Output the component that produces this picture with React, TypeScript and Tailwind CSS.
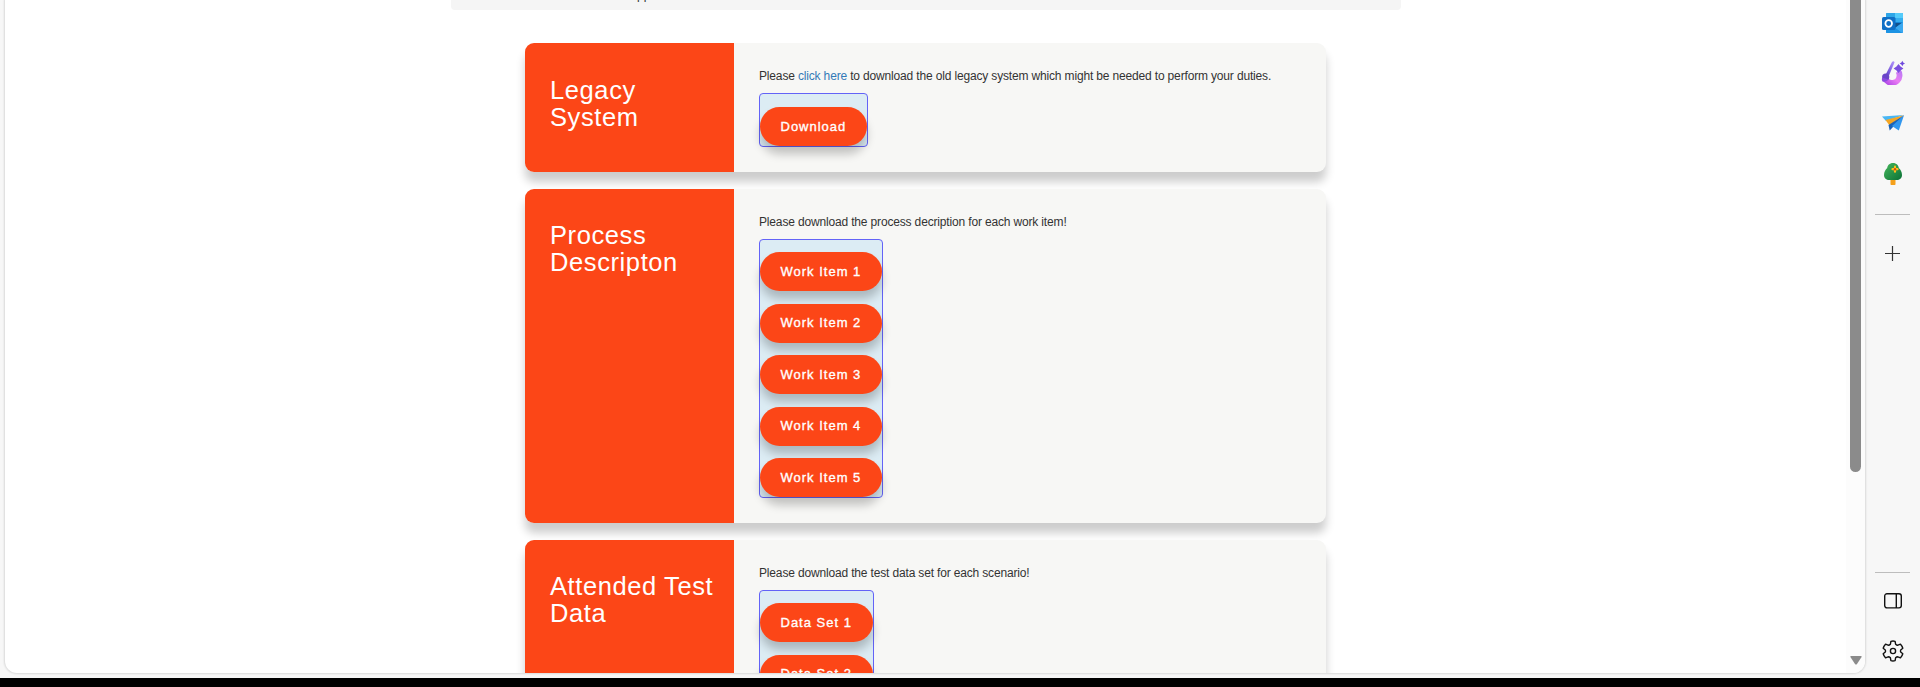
import React from "react";

function PillButton({ label }: { label: string }) {
  return (
    <span className="flex h-[39px] shrink-0 items-center whitespace-nowrap rounded-full bg-[#fc4617] pl-[20.5px] text-[13px] tracking-[1px] text-white shadow-[0_8px_10px_rgba(0,0,0,0.22)] [-webkit-text-stroke:0.35px_white]">
      {label}
    </span>
  );
}

function Card({
  title,
  buttons,
  height,
  titleClass,
  boxClass,
  children,
}: {
  title: string;
  buttons: string[];
  height: string;
  titleClass: string;
  boxClass: string;
  children: React.ReactNode;
}) {
  return (
    <section className={`flex w-[801px] shrink-0 rounded-[9px] bg-[#f7f7f5] shadow-[0_10px_10px_rgba(0,0,0,0.2)] ${height}`}>
      <div className={`w-[209px] shrink-0 rounded-l-[9px] bg-[#fc4617] pl-[25px] pr-2 ${titleClass}`}>
        <h2 className="text-[25.5px] leading-[27px] tracking-[0.6px] text-white">{title}</h2>
      </div>
      <div className="flex grow flex-col items-start pl-[25px] pt-[25px]">
        <p className="whitespace-nowrap text-[12px] leading-[17px] tracking-[-0.16px] text-[#333]">{children}</p>
        <div className={`mt-[8px] flex flex-col gap-[12.5px] rounded-[4px] border border-[#6363f7] bg-[#dcecf4] ${boxClass}`}>
          {buttons.map((b) => (
            <PillButton key={b} label={b} />
          ))}
        </div>
      </div>
    </section>
  );
}

function OutlookIcon() {
  return (
    <svg width="21" height="20" viewBox="0 0 21 20">
      <rect x="4" y="0" width="17" height="20" rx="1.2" fill="#1786d8" />
      <path d="M5 0h8v5H4V1z" fill="#2ea6e8" />
      <path d="M13 0h7a1 1 0 0 1 1 1v8h-8z" fill="#54cbfa" />
      <path d="M12 5h9v4h-9z" fill="#35aef0" />
      <path d="M12 10h9l-8 5z" fill="#12508c" />
      <path d="M21 9v10a1 1 0 0 1-1 1l-7-5z" fill="#3aa8f0" />
      <path d="M4 16l9-1 7 5H5a1 1 0 0 1-1-1z" fill="#1c93e4" />
      <rect x="0" y="4" width="13.500" height="13" rx="1.600" fill="#0f6fc6" />
      <circle cx="6.700" cy="10.500" r="3.300" fill="none" stroke="#fff" strokeWidth="1.800" />
    </svg>
  );
}

function DesignerIcon() {
  return (
    <svg width="24" height="25" viewBox="0 0 24 25">
      <defs>
        <linearGradient id="ring" x1="0" y1="1" x2="1" y2="0">
          <stop offset="0" stopColor="#b44be8" />
          <stop offset=".5" stopColor="#ea7cf3" />
          <stop offset="1" stopColor="#c07af5" />
        </linearGradient>
        <linearGradient id="brush" x1="0" y1="1" x2="1" y2="0">
          <stop offset="0" stopColor="#6040cc" />
          <stop offset="1" stopColor="#b698ff" />
        </linearGradient>
      </defs>
      <path d="M4 18a7.500 7.500 0 0 0 14.500-2q.3-3-1.500-5" fill="none" stroke="url(#ring)" strokeWidth="5.800" />
      <path d="M11 2Q12.500.3 13.600 2.200L8 15.500 5 14z" fill="url(#brush)" />
      <circle cx="4.700" cy="17" r="3.600" fill="#6a45c8" />
      <path d="M1 17.500q-.5 2.500.5 4 3 1 6-2z" fill="#8a4ae0" />
      <path d="M17.500 4l2 2.500 2.900 2-2.900 2-2 2.500-2-2.500-2.900-2 2.900-2z" fill="#7a4edf" />
      <path d="M21.300.8l.9 1.800 1.800.9-1.800.9-.9 1.800-.9-1.800-1.800-.9 1.800-.9z" fill="#6f49dc" />
    </svg>
  );
}

function PlaneIcon() {
  return (
    <svg width="22" height="16" viewBox="0 0 22 16">
      <path d="M0 1.500L22 0 4 6z" fill="#48b6f4" />
      <path d="M3.500 5L22 .2 7.500 10.500z" fill="#f5a623" />
      <path d="M22 .3L6.500 10l1.200 5.500L11 12z" fill="#1b63b8" />
      <path d="M22 .3L10 11l6.800 4.500z" fill="#3197ee" />
    </svg>
  );
}

function TreeIcon() {
  return (
    <svg width="18" height="22" viewBox="0 0 18 22">
      <defs>
        <linearGradient id="leaf" x1="0" y1="0" x2="1" y2="1">
          <stop offset="0" stopColor="#46b85c" />
          <stop offset="1" stopColor="#0b7136" />
        </linearGradient>
      </defs>
      <rect x="6.500" y="14" width="5" height="8" rx=".7" fill="#f5a01b" />
      <path d="M9 0C5.500 0 3.500 2.500 3.200 5 1.500 6.500 0 9 0 12c0 3.500 2.500 5 5 5h8c2.500 0 5-1.500 5-5 0-3-1.500-5.500-3.200-7C14.500 2.500 12.500 0 9 0z" fill="url(#leaf)" />
      <path d="M11 3.700v5M8.500 6.200h5" stroke="#fbc21c" strokeWidth="2.200" strokeLinecap="round" />
      <circle cx="11" cy="6.200" r="1.200" fill="#d9480f" />
    </svg>
  );
}

function GearIcon() {
  return (
    <svg width="22" height="22" viewBox="0 0 22 22" fill="none" stroke="#111" strokeWidth="1.400" strokeLinejoin="round">
      <path d="M8.900 1.300Q11 .6 13.100 1.300L13.600 4.200Q14.800 5.300 15.900 5.200L18.500 4.200Q20.200 6 20.800 8.200L18.700 10Q18.300 11 18.700 12L20.800 13.800Q20.200 16 18.500 17.800L15.900 16.800Q14.500 16.800 13.600 17.800L13.100 20.700Q11 21.400 8.900 20.700L8.400 17.800Q7.500 16.800 6.100 16.800L3.500 17.800Q1.800 16 1.200 13.800L3.300 12Q3.700 11 3.300 10L1.200 8.200Q1.800 6 3.500 4.200L6.100 5.200Q7.500 5.200 8.400 4.200Z" />
      <circle cx="11" cy="11" r="2.600" />
    </svg>
  );
}

function Sidebar() {
  return (
    <aside className="flex w-[55px] shrink-0 flex-col items-center">
      <div className="flex h-[46px] items-center"><OutlookIcon /></div>
      <div className="flex h-[53px] items-center"><DesignerIcon /></div>
      <div className="flex h-[48px] items-center"><PlaneIcon /></div>
      <div className="flex h-[54px] items-center"><TreeIcon /></div>
      <div className="mt-[13px] h-px w-[35px] bg-[#bdbdbd]" />
      <svg className="mt-[31px]" width="15" height="15" viewBox="0 0 15 15">
        <path d="M7.500 0v15M0 7.500h15" stroke="#333" strokeWidth="1.200" />
      </svg>
      <div className="mt-auto h-px w-[35px] bg-[#bdbdbd]" />
      <svg className="mt-[20px]" width="18" height="16" viewBox="0 0 18 16" fill="none" stroke="#111" strokeWidth="1.400">
        <rect x=".7" y=".7" width="16.600" height="14.200" rx="2.300" />
        <path d="M12.300 1v14" />
      </svg>
      <div className="mb-[16px] mt-[31px]"><GearIcon /></div>
    </aside>
  );
}

export default function App() {
  return (
    <div className="flex h-[687px] w-[1920px] flex-col overflow-hidden bg-black font-['Liberation_Sans',Arial,sans-serif]">
      <div className="flex h-[678px] shrink-0 bg-[#f7f7f7] pl-[5px]">
        <div className="flex h-[673px] w-[1860px] shrink-0 overflow-hidden rounded-b-[12px] bg-white shadow-[0_0_2px_1px_rgba(0,0,0,0.12)]">
          <main className="flex h-[673px] w-[1841px] shrink-0 flex-col overflow-hidden">
            <div className="ml-[446px] flex h-[10px] w-[950px] shrink-0 items-end rounded-b-[4px] bg-[#f5f5f5] pl-[186px]">
              <span className="mb-[9px] text-[12px] leading-[12px] text-[#333]">pp</span>
            </div>
            <div className="ml-[520px] mt-[33px] flex flex-col gap-[17px]">
              <Card title="Legacy System" buttons={["Download"]} height="h-[129px]" titleClass="pt-[34px]" boxClass="w-[109px] pt-[13px]">
                Please <a className="text-[#337ab7]">click here</a> to download the old legacy system which might be needed to perform your duties.
              </Card>
              <Card
                title="Process Descripton"
                buttons={["Work Item 1", "Work Item 2", "Work Item 3", "Work Item 4", "Work Item 5"]}
                height="h-[334px]"
                titleClass="pt-[33px]"
                boxClass="w-[124px] pt-[12px]"
              >
                Please download the process decription for each work item!
              </Card>
              <Card
                title="Attended Test Data"
                buttons={["Data Set 1", "Data Set 2"]}
                height="h-[334px]"
                titleClass="pt-[33px]"
                boxClass="w-[115px] pt-[12px]"
              >
                Please download the test data set for each scenario!
              </Card>
            </div>
          </main>
          <div className="flex w-[19px] shrink-0 flex-col items-center justify-between bg-[#fcfcfc] pb-[8px]">
            <div className="h-[472px] w-[11px] rounded-b-[6px] bg-[#8b8b8b]" />
            <svg width="12" height="9" viewBox="0 0 12 9">
              <path d="M1 0h10q1 0 .6 1L7 8Q6 9 5 8L.4 1Q0 0 1 0z" fill="#8b8b8b" />
            </svg>
          </div>
        </div>
        <Sidebar />
      </div>
    </div>
  );
}
